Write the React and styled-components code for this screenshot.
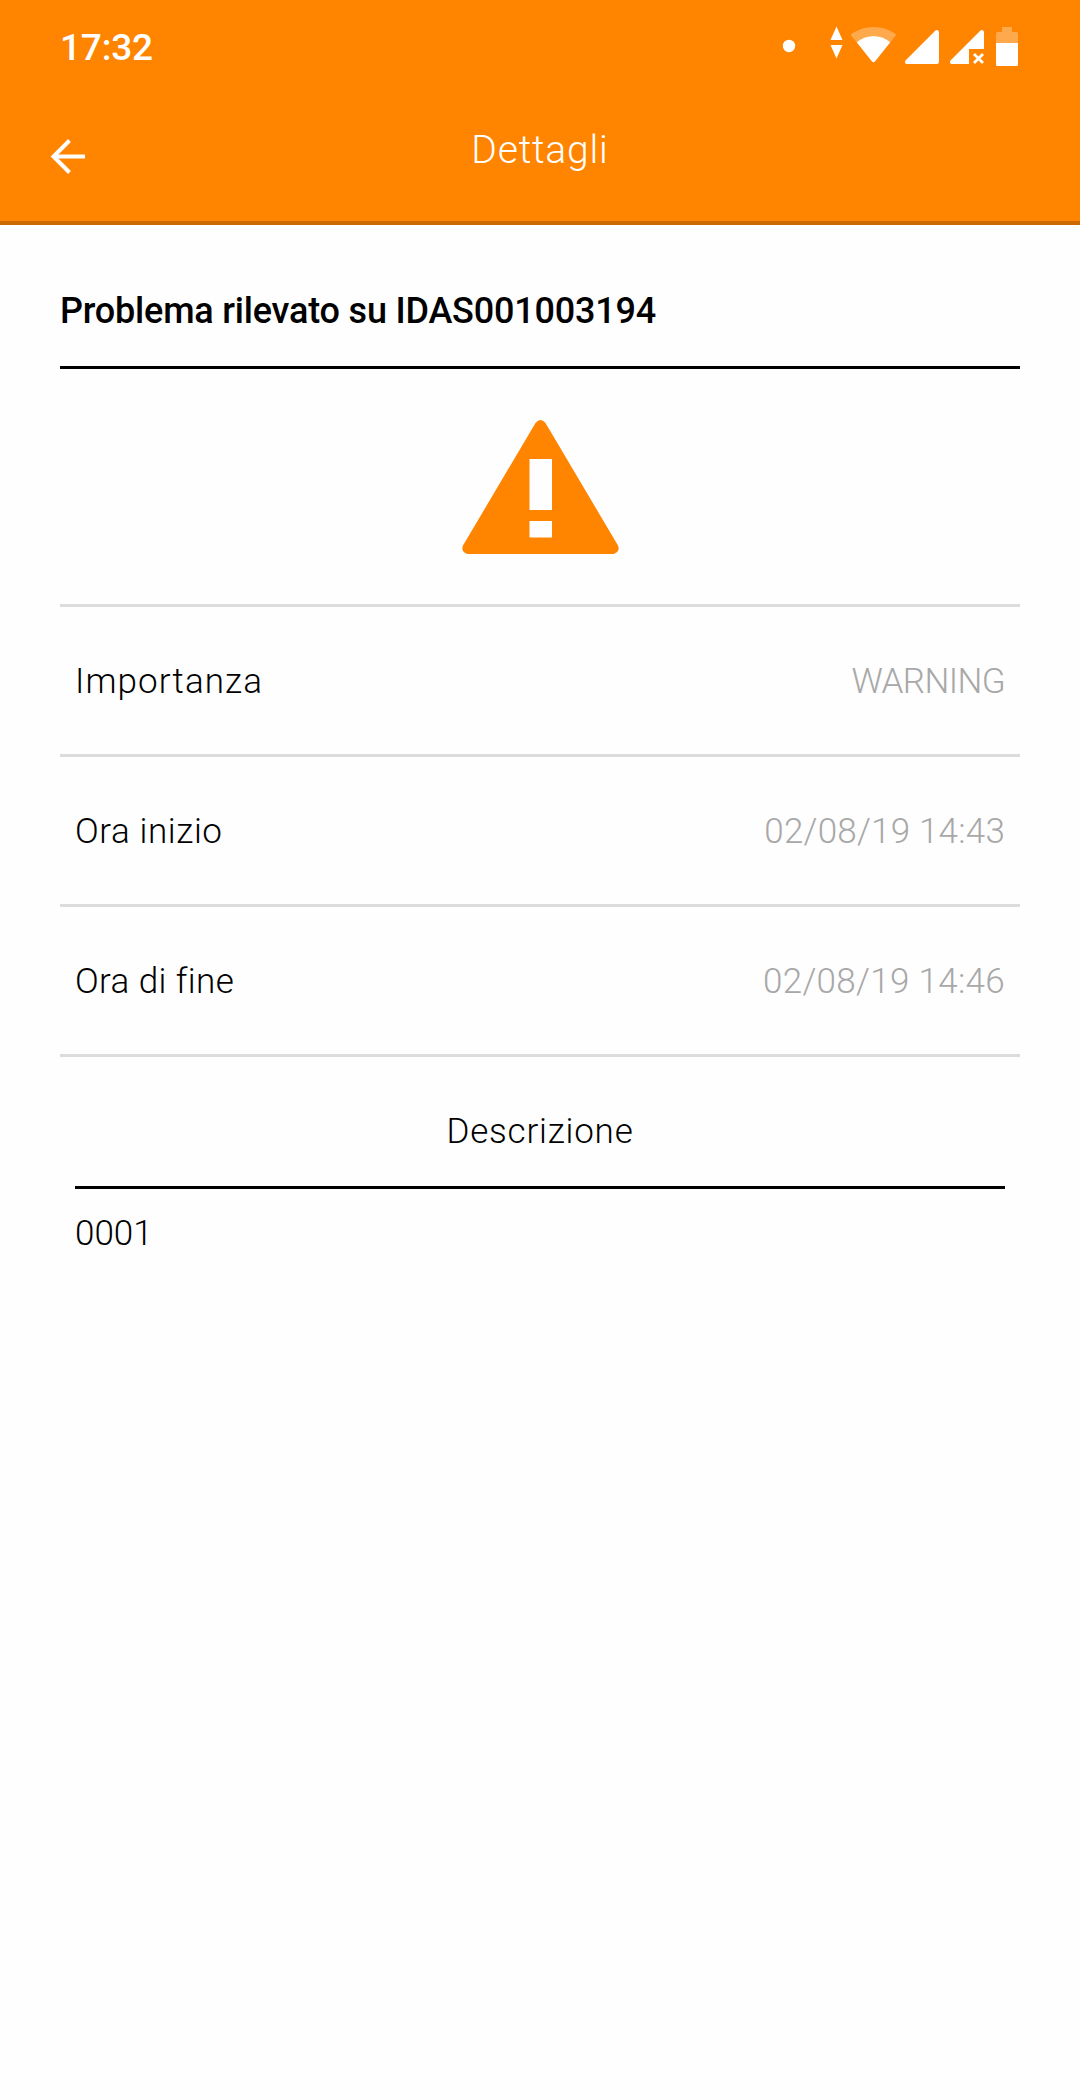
import React from "react";
import styled, { createGlobalStyle } from "styled-components";

const rows = [
  { label: "Importanza", value: "WARNING", labelSpacing: 1.1, valueSpacing: -0.6 },
  { label: "Ora inizio", value: "02/08/19 14:43", labelSpacing: 0.6, valueSpacing: 0.2 },
  { label: "Ora di fine", value: "02/08/19 14:46", labelSpacing: 0.4, valueSpacing: 0.3 },
];

function StatusIcons() {
  return (
    <StatusSvg width="236" height="44" viewBox="780 24 236 44" fill="#fff">
      <circle cx="789" cy="46" r="6.2" />
      <path d="M836.5 26.5l6 13.5h-12zM830.5 45h12l-6 13.5z" />
      <path
        opacity=".3"
        d="M851 35.5Q850.8 34.3 852 33.4C865 24.8 882 24.8 895 33.4Q896.2 34.3 895.7 35.5L890.3 42.2C880 34 867 34 856.7 42.2z"
      />
      <path d="M856.7 42.2C867 34 880 34 890.3 42.2L875 61.6Q873.5 63.2 872 61.6z" />
      <path d="M939 32v29.5q0 2.5-2.500 2.500H906.500q-2.500-1-1-3.500L935.500 30.500q2.500-1.500 3.500 1.500z" />
      <path d="M984 32v17h-15v15H951.500q-2.500-1-1-3.500L980.500 30.500q2.500-1.500 3.500 1.500z" />
      <path d="M974 54l9 9M983 54l-9 9" stroke="#fff" strokeWidth="2.8" />
      <path opacity=".3" d="M1002 27h10v5h4.500q1.500 0 1.500 1.500V43h-22v-9.500q0-1.500 1.500-1.500h4.500z" />
      <path d="M996 43h22v21.500q0 1.500-1.500 1.500h-19q-1.500 0-1.500-1.500z" />
    </StatusSvg>
  );
}

export default function App() {
  return (
    <Screen>
      <GlobalStyle />
      <Header>
        <StatusBar>
          <Clock>17:32</Clock>
          <StatusIcons />
        </StatusBar>
        <NavBar>
          <BackButton type="button" aria-label="Indietro">
            <svg width="36" height="36" viewBox="0 0 36 36" fill="none" stroke="#fff" strokeWidth="4">
              <path d="M35 18.500H4M19.500 2.500L3.500 18.500l16 16" />
            </svg>
          </BackButton>
          <NavTitle>Dettagli</NavTitle>
        </NavBar>
      </Header>
      <Content>
        <ProblemTitle>Problema rilevato su IDAS001003194</ProblemTitle>
        <IconRow>
          <svg width="157" height="134" viewBox="0 0 157 134">
            <path
              fill="#ff8400"
              fillRule="evenodd"
              d="M73.500 3Q78.500-3 83.500 3L156 125.500Q158.500 132 151.500 134H5.500Q-1.500 132 1 125.500zM67.500 39v51h22.500V39zM67.500 101v16.500h22.500V101z"
            />
          </svg>
        </IconRow>
        {rows.map((row) => (
          <Row key={row.label}>
            <Label $spacing={row.labelSpacing}>{row.label}</Label>
            <Value $spacing={row.valueSpacing}>{row.value}</Value>
          </Row>
        ))}
        <Description>
          <DescriptionTitle>Descrizione</DescriptionTitle>
          <DescriptionText>0001</DescriptionText>
        </Description>
      </Content>
    </Screen>
  );
}

const GlobalStyle = createGlobalStyle`
  * {
    box-sizing: border-box;
  }
  body {
    margin: 0;
    background: #fefefe;
  }
`;

const Screen = styled.div`
  width: 1080px;
  min-height: 2100px;
  background: #fefefe;
  color: #000;
  font-family: Roboto, "Open Sans", sans-serif;
  font-weight: 300;
  font-size: 35px;
`;

const Header = styled.header`
  height: 225px;
  background: #ff8400;
  border-bottom: 4px solid #cc6a00;
  color: #fff;
`;

const StatusBar = styled.div`
  display: flex;
  justify-content: space-between;
  height: 96px;
  padding: 24px 60px 0;
`;

const Clock = styled.span`
  font-size: 37px;
  font-weight: 500;
  line-height: 48px;
  letter-spacing: -0.2px;
`;

const StatusSvg = styled.svg`
  overflow: visible;
  margin-right: 4px;
`;

const NavBar = styled.div`
  display: grid;
  grid-template-columns: 120px 1fr 120px;
  height: 125px;
`;

const BackButton = styled.button`
  display: flex;
  align-items: flex-start;
  padding: 42px 0 0 50px;
  border: 0;
  background: none;
`;

const NavTitle = styled.h1`
  margin: 0;
  padding-top: 30px;
  font-size: 39px;
  font-weight: 300;
  line-height: 48px;
  letter-spacing: 0.8px;
  text-align: center;
`;

const Content = styled.main`
  padding: 0 60px;
`;

const ProblemTitle = styled.h2`
  height: 144px;
  margin: 0;
  padding-top: 62px;
  border-bottom: 3px solid #000;
  font-size: 36px;
  font-weight: 500;
  line-height: 48px;
  letter-spacing: -0.2px;
  white-space: nowrap;
`;

const IconRow = styled.div`
  display: flex;
  justify-content: center;
  height: 238px;
  padding-top: 51px;
  border-bottom: 3px solid #dcdcdc;
`;

const Row = styled.div`
  display: flex;
  justify-content: space-between;
  align-items: center;
  height: 150px;
  padding: 2px 15px 0;
  border-bottom: 3px solid #dcdcdc;
`;

const Label = styled.span`
  letter-spacing: ${(props) => props.$spacing}px;
`;

const Value = styled.span`
  color: #a8a8a8;
  letter-spacing: ${(props) => props.$spacing}px;
`;

const Description = styled.section`
  padding: 0 15px;
`;

const DescriptionTitle = styled.h3`
  height: 132px;
  margin: 0;
  padding-top: 51px;
  border-bottom: 3px solid #000;
  font-size: 35px;
  font-weight: 300;
  line-height: 48px;
  letter-spacing: 0.8px;
  text-align: center;
`;

const DescriptionText = styled.p`
  margin: 0;
  padding-top: 21px;
  line-height: 48px;
`;
